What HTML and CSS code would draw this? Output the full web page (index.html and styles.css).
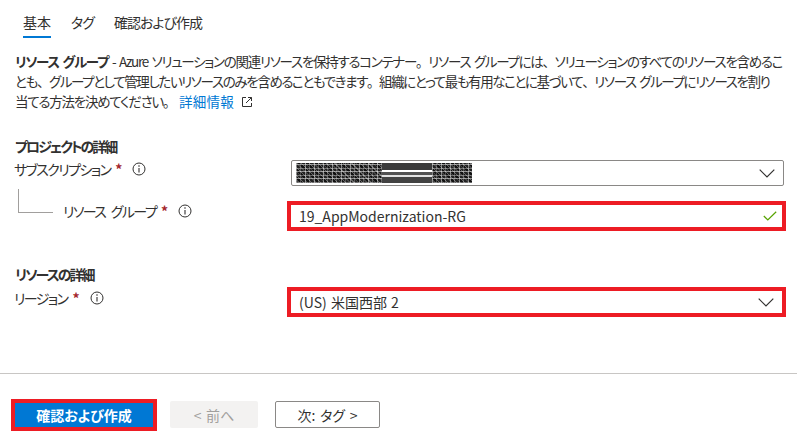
FILE: index.html
```html
<!DOCTYPE html>
<html lang="ja">
<head>
<meta charset="utf-8">
<link rel="stylesheet" href="styles.css">
</head>
<body>
<div class="page">
  <nav class="tabs">
    <div class="tab active">基本</div>
    <div class="tab">タグ</div>
    <div class="tab">確認および作成</div>
  </nav>

  <p class="desc"><span class="l1"><b>リソース グループ</b> - Azure ソリューションの関連リソースを保持するコンテナー<span class="p">。</span>リソース グループには<span class="p">、</span>ソリューションのすべてのリソースを含めるこ</span><br><span class="l2">とも<span class="p">、</span>グループとして管理したいリソースのみを含めることもできます<span class="p">。</span>組織にとって最も有用なことに基づいて<span class="p">、</span>リソース グループにリソースを割り</span><br>当てる方法を決めてください<span class="p">。</span> <a class="link" href="#">詳細情報 <svg class="ext" width="12" height="12" viewBox="0 0 12 12"><path d="M5 1.5H1.5v9h9V7" fill="none" stroke="#323130" stroke-width="1"/><path d="M7 1.5h3.5V5M10.5 1.5L5 7" fill="none" stroke="#323130" stroke-width="1"/></svg></a></p>

  <h3 class="heading h1">プロジェクトの詳細</h3>
  <div class="row sub">
    <div class="label"><span class="ltext">サブスクリプション</span><span class="req">*</span><svg class="info" width="14" height="14" viewBox="0 0 14 14"><circle cx="7" cy="7" r="6" fill="none" stroke="#323130" stroke-width="1"/><path d="M7 6v4.5" stroke="#323130" stroke-width="1.1"/><circle cx="7" cy="4" r="0.8" fill="#323130"/></svg></div>
    <div class="control select tall">
      <div class="redacted"><span class="rd a"></span><span class="rd b"></span><span class="rd c"></span></div>
      <svg class="chev" width="16" height="9" viewBox="0 0 16 9"><path d="M0.7 0.7L8 8L15.3 0.7" fill="none" stroke="#323130" stroke-width="1.2"/></svg>
    </div>
  </div>

  <div class="row child">
    <div class="label"><span class="connector"></span><span class="ltext">リソース グループ</span><span class="req">*</span><svg class="info" width="14" height="14" viewBox="0 0 14 14"><circle cx="7" cy="7" r="6" fill="none" stroke="#323130" stroke-width="1"/><path d="M7 6v4.5" stroke="#323130" stroke-width="1.1"/><circle cx="7" cy="4" r="0.8" fill="#323130"/></svg></div>
    <div class="control marked">
      <span class="value">19_AppModernization-RG</span>
      <svg class="check" width="14" height="10" viewBox="0 0 14 10"><path d="M0.8 5L4.8 9L13.2 0.8" fill="none" stroke="#57a300" stroke-width="1.2"/></svg>
    </div>
  </div>

  <h3 class="heading h2">リソースの詳細</h3>
  <div class="row region">
    <div class="label"><span class="ltext">リージョン</span><span class="req">*</span><svg class="info" width="14" height="14" viewBox="0 0 14 14"><circle cx="7" cy="7" r="6" fill="none" stroke="#323130" stroke-width="1"/><path d="M7 6v4.5" stroke="#323130" stroke-width="1.1"/><circle cx="7" cy="4" r="0.8" fill="#323130"/></svg></div>
    <div class="control select marked">
      <span class="value">(US) 米国西部 2</span>
      <svg class="chev" width="16" height="9" viewBox="0 0 16 9"><path d="M0.7 0.7L8 8L15.3 0.7" fill="none" stroke="#323130" stroke-width="1.2"/></svg>
    </div>
  </div>
</div>

<footer class="footer">
  <button class="btn primary">確認および作成</button>
  <button class="btn disabled">&lt; 前へ</button>
  <button class="btn secondary">次: タグ &gt;</button>
</footer>
</body>
</html>
```

FILE: styles.css
```css
html, body {
  margin: 0;
  padding: 0;
}
body {
  width: 797px;
  height: 437px;
  overflow: hidden;
  background: #fff;
  color: #323130;
  font-family: "Noto Sans CJK JP", "Noto Sans", sans-serif;
  font-size: 14px;
  font-feature-settings: "palt";
  word-spacing: 2px;
}
.page {
  padding: 0 8px 0 15px;
}
.tabs {
  display: flex;
  gap: 20px;
  padding-left: 8px;
}
.tab {
  padding-top: 12px;
  padding-bottom: 4px;
  line-height: 20px;
  border-bottom: 2px solid transparent;
  font-size: 14px;
  letter-spacing: -1px;
}
.tab.active {
  border-bottom-color: #0078d4;
  letter-spacing: 0;
}
.desc {
  margin: 13px 0 0 0;
  font-size: 13.5px;
  line-height: 20px;
  white-space: nowrap;
  letter-spacing: -1.25px;
}
.desc .l1 {
  letter-spacing: -1.28px;
}
.desc .l2 {
  letter-spacing: -1.4px;
}
.desc .p {
  font-feature-settings: normal;
}
.desc b {
  font-weight: 700;
}
.link {
  color: #0078d4;
  text-decoration: none;
  letter-spacing: 0.3px;
}
.ext {
  vertical-align: -1px;
  margin-left: 2px;
}
.heading {
  margin: 0;
  font-size: 14px;
  font-weight: 700;
  line-height: 20px;
  letter-spacing: -2px;
}
.h1 { margin-top: 25px; }
.h2 { margin-top: 36px; }
.row {
  display: flex;
  align-items: flex-start;
}
.label {
  width: 275px;
  flex: none;
  display: flex;
  align-items: center;
  line-height: 20px;
  white-space: pre;
}
.ltext {
  letter-spacing: -1.6px;
  word-spacing: 4px;
  margin-left: -1px;
}
.req {
  color: #a4262c;
  font-weight: 700;
  margin-left: 5px;
}
.info {
  margin-left: 10px;
}
.sub { margin-top: 4px; }
.sub .label { margin-top: -1px; }
.child { margin-top: 18px; }
.child .label { margin-top: -3px; }
.connector {
  display: block;
  width: 35px;
  height: 24px;
  box-sizing: border-box;
  margin: -12px 11px 0 3px;
  border-left: 1px solid #a19f9d;
  border-bottom: 1px solid #a19f9d;
  align-self: flex-start;
}
.region { margin-top: 6px; }
.region .label { margin-top: -2px; }
.control {
  width: 493px;
  height: 24px;
  box-sizing: border-box;
  border: 1px solid #8a8886;
  border-radius: 2px;
  display: flex;
  align-items: center;
  padding: 0 8px 0 8px;
}
.control.tall {
  height: 26px;
  margin-left: 1px;
  padding-left: 4px;
}
.control.marked {
  outline: 4px solid #ed1c24;
  outline-offset: -1px;
  border-radius: 0;
}
.value {
  flex: 1;
  font-size: 14px;
  line-height: 20px;
  word-spacing: 1px;
}
.chev {
  margin-left: auto;
}
.check {
  margin-right: -3px;
}
.redacted {
  display: flex;
  align-items: stretch;
  width: 176px;
  height: 20px;
}
.rd {
  display: block;
  height: 100%;
  background:
    repeating-linear-gradient(90deg, rgba(255,255,255,0.45) 0 1px, transparent 1px 4px, rgba(255,255,255,0.25) 4px 5px, transparent 5px 9px),
    repeating-linear-gradient(0deg, rgba(255,255,255,0.35) 0 1px, transparent 1px 4px, rgba(255,255,255,0.5) 4px 5px, transparent 5px 7px),
    repeating-linear-gradient(45deg, #222 0 2px, #444 2px 3px, #111 3px 5px, #666 5px 6px);
}
.rd.a { width: 86px; }
.rd.b {
  width: 50px;
  background:
    linear-gradient(180deg, #1a1a1a 0 35%, #fff 35% 45%, #333 45% 60%, #ddd 60% 70%, #222 70% 100%),
    #333;
  opacity: 0.85;
}
.rd.c { width: 40px; }
.footer {
  margin-top: 59px;
  border-top: 1px solid #c8c6c4;
  padding: 27px 0 0 15px;
  display: flex;
  align-items: center;
  gap: 17px;
}
.btn {
  font-family: inherit;
  font-feature-settings: "palt";
  font-size: 14px;
  line-height: 20px;
  padding: 0;
  border-radius: 2px;
  box-sizing: border-box;
  word-spacing: 1.5px;
  cursor: pointer;
}
.primary {
  width: 138px;
  height: 24px;
  background: #0078d4;
  color: #fff;
  font-weight: 700;
  border: none;
  border-radius: 0;
  outline: 4px solid #ed1c24;
}
.disabled {
  width: 88px;
  height: 27px;
  background: #f3f2f1;
  color: #a19f9d;
  border: none;
}
.secondary {
  width: 105px;
  height: 27px;
  background: #fff;
  color: #323130;
  border: 1px solid #8a8886;
}
```
